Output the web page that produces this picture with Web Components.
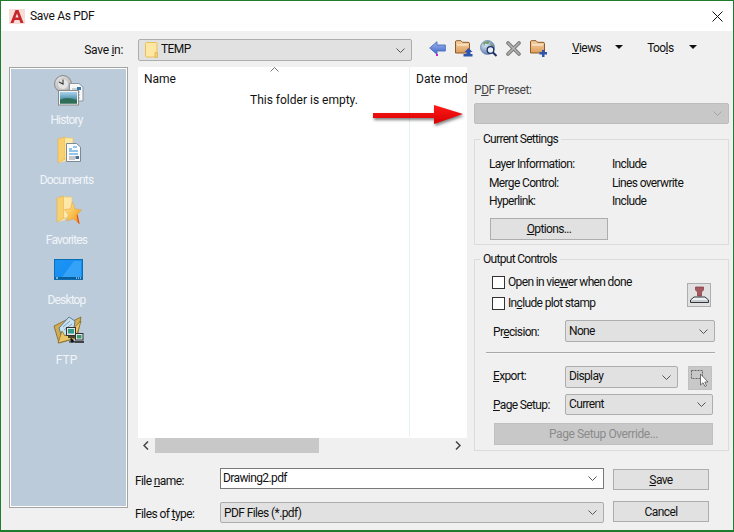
<!DOCTYPE html>
<html>
<head>
<meta charset="utf-8">
<title>Save As PDF</title>
<style>
    html, body { margin: 0; padding: 0; background: #f0f0f0; }
    body { font: 12px Roboto, "Liberation Sans", sans-serif; color: #111; }
</style>
</head>
<body>
<pdf-dialog></pdf-dialog>
<script>
// Icon table, each one drawn at its real pixel size
const FOLDER = `
    <path d="M1 3 L9 1 L9 2 L15 2 L15 22 L9 22 L9 25 L1 27 Z" fill="#fde49a"/>
    <path d="M1 3 L8 1 L8 23 L1 27 Z" fill="#f9d06f" stroke="#dcae52" stroke-width=".6"/>
    <path d="M8 2 H16 V23 H8" fill="#fde8a8" stroke="#e8c26a" stroke-width=".6"/>`;

const ICONS = {
    logo: `<svg width="16" height="15" viewBox="0 0 16 15"><rect width="16" height="15" fill="#f7dcd8"/>
        <path d="M1.5 14 L6.5 1 H9.5 L14.5 14 H11.5 L10.4 11 H5.6 L4.5 14 Z M6.4 8.6 H9.6 L8 4.4 Z" fill="#c5252b" fill-rule="evenodd"/></svg>`,
    close: `<svg width="11" height="11" viewBox="0 0 11 11"><path d="M.5 .5 L10.5 10.5 M10.5 .5 L.5 10.5" stroke="#111" fill="none"/></svg>`,
    smallFolder: `<svg width="13" height="16" viewBox="0 0 13 16"><path d="M.5 1.5 Q.5 .5 1.5 .5 H11 Q12 .5 12 1.5 V15 H1.5 Q.5 15 .5 14 Z" fill="#fde7a2" stroke="#e9c15c"/>
        <path d="M10 10.5 H12.5 V15.5 H10 Z" fill="#f6d37a" stroke="#e0b24e" stroke-width=".8"/></svg>`,
    back: `<svg width="17" height="15" viewBox="0 0 17 15"><defs><linearGradient id="g" x1="0" y1="0" x2="0" y2="1"><stop offset="0" stop-color="#9db8ef"/><stop offset="1" stop-color="#3d63c4"/></linearGradient></defs>
        <path d="M.7 7 L8 .7 V4 H16.3 V10 H8 V13.4 Z" fill="url(#g)" stroke="#4a6cc0" stroke-width=".9"/><rect x="7" y="13" width="2" height="2" fill="#d020c8"/></svg>`,
    up: `<svg width="18" height="17" viewBox="0 0 18 17"><defs><linearGradient id="g" x1="0" y1="0" x2="0" y2="1"><stop offset="0" stop-color="#f6d3a4"/><stop offset="1" stop-color="#dc9d5b"/></linearGradient></defs>
        <path d="M.5 2 Q.5 .7 1.7 .7 H6 L7.5 2.3 H13 Q14.5 2.3 14.5 3.6 V13 H.5 Z" fill="url(#g)" stroke="#8d5a28"/><rect x="2" y="4.3" width="11" height="1.2" fill="#fbeedc"/>
        <path d="M13.5 8 L17.5 12 H15.5 V14 H17.5 V16.5 H8.5 V14 H11.5 V12 H9.5 Z" fill="#2f55ad"/></svg>`,
    search: `<svg width="18" height="17" viewBox="0 0 18 17"><defs><radialGradient id="g" cx=".35" cy=".3" r=".8"><stop offset="0" stop-color="#dce7f4"/><stop offset="1" stop-color="#4d6fa6"/></radialGradient></defs>
        <circle cx="7.5" cy="7.5" r="7" fill="url(#g)" stroke="#6b86ad" stroke-width=".8"/><path d="M3 3 Q6 .5 10 1.5 L8 4 L5 3.5 L4.5 6 Z M10 3 L13.5 6 L11 6 Z" fill="#6e9a62"/>
        <circle cx="10.5" cy="10" r="3.3" fill="#e8f0f8" stroke="#1d2f63" stroke-width="1.3"/><path d="M13 12.5 L16.5 16" stroke="#1d2f63" stroke-width="2"/></svg>`,
    del: `<svg width="15" height="15" viewBox="0 0 15 15"><path d="M2 2 L13 13 M13 2 L2 13" stroke="#777" stroke-width="3.6" stroke-linecap="round"/><path d="M2 2 L13 13 M13 2 L2 13" stroke="#b2b2b2" stroke-width="1.6" stroke-linecap="round"/></svg>`,
    newFolder: `<svg width="18" height="17" viewBox="0 0 18 17"><defs><linearGradient id="g" x1="0" y1="0" x2="0" y2="1"><stop offset="0" stop-color="#f6d3a4"/><stop offset="1" stop-color="#dc9d5b"/></linearGradient></defs>
        <path d="M.5 2 Q.5 .7 1.7 .7 H6 L7.5 2.3 H13 Q14.5 2.3 14.5 3.6 V13 H.5 Z" fill="url(#g)" stroke="#8d5a28"/><rect x="2" y="4.3" width="11" height="1.2" fill="#fbeedc"/>
        <path d="M12 10 H14.5 V12 H17 V14.5 H14.5 V17 H12 V14.5 H9.5 V12 H12 Z" fill="#2f55ad"/></svg>`,
    tri: `<svg width="8" height="4" viewBox="0 0 8 4"><path d="M0 0 H8 L4 4 Z" fill="#111"/></svg>`,
    history: `<svg width="30" height="31" viewBox="0 0 30 31"><defs><radialGradient id="c" cx=".4" cy=".35" r=".75"><stop offset="0" stop-color="#f2f2f2"/><stop offset="1" stop-color="#a8a8a8"/></radialGradient>
        <linearGradient id="s" x1="0" y1="0" x2="0" y2="1"><stop offset="0" stop-color="#a9d3ee"/><stop offset=".55" stop-color="#5c9bb6"/><stop offset="1" stop-color="#2c6a58"/></linearGradient></defs>
        <circle cx="9" cy="9" r="8.5" fill="url(#c)" stroke="#8b8b8b"/><circle cx="9" cy="9" r="5.5" fill="#e4e4e4" stroke="#aaa" stroke-width=".5"/><path d="M9 4.5 V9 L5 7" stroke="#333" fill="none" stroke-width="1.1"/>
        <path d="M15.5 8.5 H25 L29 12 V26 H15.5 Z" fill="#f8f8f8" stroke="#8e979f"/><path d="M18 14 H26 M18 17 H26 M18 20 H26 M18 23 H26" stroke="#9aa5ad"/><rect x="23" y="12" width="4" height="3" fill="#3b78a8"/>
        <rect x="4.5" y="15.5" width="20" height="14.5" fill="#f4f4f4" stroke="#8b8b8b"/><rect x="6" y="17" width="17" height="11.5" fill="url(#s)"/><path d="M6 25 Q12 21 23 25 V28.5 H6 Z" fill="#2f6f59"/></svg>`,
    documents: `<svg width="24" height="28" viewBox="0 0 24 28">${FOLDER}
        <path d="M9.5 7.5 H19.5 L23.5 11 V25.5 H9.5 Z" fill="#fbfbfb" stroke="#7e8a92"/><path d="M12 13 H15 M16 11 H20 M12 15 H21 M12 18 H21" stroke="#2f8fd8"/><path d="M12 21 H18 M12 23 H18" stroke="#8a949c"/><rect x="18.5" y="20" width="3.5" height="3" fill="#47708f"/></svg>`,
    favorites: `<svg width="26" height="30" viewBox="0 0 26 30">${FOLDER}
        <defs><linearGradient id="st" x1="0" y1="0" x2="1" y2="1"><stop offset="0" stop-color="#fff0a8"/><stop offset=".6" stop-color="#f7b73f"/><stop offset="1" stop-color="#e88a20"/></linearGradient></defs>
        <path d="M16.5 7 L19 14 L25.5 14.8 L21.5 19.5 L23.5 29 L17.5 23.8 L10.8 26 L12.5 19.6 L8.5 14.6 L14.5 13.8 Z" fill="url(#st)" stroke="#eaa24a" stroke-width=".6"/><path d="M21.5 19.5 L23.5 29 L22 27.8 L20.6 20 Z" fill="#d9482a"/></svg>`,
    desktop: `<svg width="29" height="21" viewBox="0 0 29 21"><defs><linearGradient id="b" x1="0" y1="0" x2="1" y2="1"><stop offset="0" stop-color="#1f93f3"/><stop offset="1" stop-color="#0d8cf2"/></linearGradient></defs>
        <rect x=".5" y=".5" width="28" height="20" fill="url(#b)" stroke="#0b6fb7"/><path d="M8 18 L20 2 H27 V18 Z" fill="#3fa8f8" opacity=".75"/><rect x="1" y="18" width="27" height="2" fill="#0a5f9d"/>
        <path d="M2 19 H4 M22 19 H23 M24 19 H25 M26 19 H27" stroke="#fff"/></svg>`,
    ftp: `<svg width="31" height="29" viewBox="0 0 31 29"><path d="M1 10 L15 3 L18 6 L28 1 L24 22 L6 27 Z" fill="#d2ac52" stroke="#7d6528" stroke-width=".8"/>
        <path d="M6 12 L16 1 L22 5 L20 18 L10 25 Z" fill="#c6e0f0" stroke="#44688a" stroke-width=".8"/><path d="M10 11 L17 5 M11 14 L19 8" stroke="#7da0bc"/>
        <path d="M5 27 L9 15 L12 20 L28 5 L23 22 Z" fill="#e9c767" stroke="#8a6f2c" stroke-width=".8"/>
        <rect x="13.5" y="11.5" width="9" height="8" fill="#dfe7e6" stroke="#333"/><rect x="15" y="13" width="6" height="4.5" fill="#2f9a86"/><path d="M15 21 H22" stroke="#222" stroke-width="1.6"/>
        <rect x="22.5" y="17.5" width="7.5" height="6.5" fill="#dfe7e6" stroke="#333"/><rect x="24" y="19" width="4.5" height="3.5" fill="#3a9b73"/><path d="M22 26 H31" stroke="#222" stroke-width="1.6"/><path d="M18 22 V26 H22 M16 26 H20" stroke="#222"/></svg>`,
    stamp: `<svg width="19" height="18" viewBox="0 0 19 18"><path d="M5.5 1 H13.5 V4 L11.5 6 V10 H7.5 V6 L5.5 4 Z" fill="#a65a60" stroke="#7c3d42" stroke-width=".7"/>
        <path d="M4 11 H15 L18.5 14 V16.5 H.5 V14 Z" fill="#eef1f4" stroke="#222" stroke-width=".9"/><path d="M1 15 H18" stroke="#9fa8b0"/></svg>`,
    pick: `<svg width="18" height="18" viewBox="0 0 18 18"><rect x=".5" y="1.5" width="11" height="8" fill="none" stroke="#666" stroke-dasharray="2 1"/>
        <path d="M9.5 5 V16 L12 13.7 L14 17.5 L15.5 16.6 L13.8 13 H17 Z" fill="#fff" stroke="#555" stroke-width=".8"/></svg>`
};

class WinIcon extends HTMLElement {
    connectedCallback() {
        if (this.shadowRoot) return;
        this.attachShadow({ mode: 'open' });
        this.shadowRoot.innerHTML = `<style>:host { display: inline-flex; line-height: 0; } svg { display: block; }</style>`
            + (ICONS[this.getAttribute('name')] || '');
    }
}

const CHEVRON = `<svg width="9" height="5" viewBox="0 0 9 5"><path d="M.5 .5 L4.5 4.5 L8.5 .5" fill="none" stroke="currentColor"/></svg>`;

class WinCombo extends HTMLElement {
    connectedCallback() {
        if (this.shadowRoot) return;
        this.attachShadow({ mode: 'open' });
        this.shadowRoot.innerHTML = `
            <style>
                :host {
                    display: flex;
                    box-sizing: border-box;
                    height: 22px;
                    align-items: center;
                    background: #e1e1e1;
                    border: 1px solid #adadad;
                    border-radius: 2px;
                    padding: 0 6px 0 3px;
                    color: #555;
                }
                :host([disabled]) { background: #c8c8c8; border-color: #bdbdbd; color: #a4a4a4; }
                :host([edit]) { background: #fff; border-color: #7a7a7a; border-radius: 0; padding-left: 2px; }
                .text { flex: 1; display: flex; align-items: center; gap: 3px; color: #111; margin-top: -2px; white-space: nowrap; }
                svg { display: block; flex: none; }
            </style>
            <div class="text"><slot></slot></div>
            ${CHEVRON}
        `;
    }
}

class WinButton extends HTMLElement {
    connectedCallback() {
        if (this.shadowRoot) return;
        this.attachShadow({ mode: 'open' });
        this.shadowRoot.innerHTML = `
            <style>
                :host {
                    display: flex;
                    box-sizing: border-box;
                    align-items: center;
                    justify-content: center;
                    height: 22px;
                    background: #e1e1e1;
                    border: 1px solid #adadad;
                    color: #111;
                }
                :host([disabled]) { background: #c8c8c8; border-color: #c0c0c0; color: #8b8b8b; }
            </style>
            <slot></slot>
        `;
    }
}

class GroupBox extends HTMLElement {
    connectedCallback() {
        if (this.shadowRoot) return;
        this.attachShadow({ mode: 'open' });
        this.shadowRoot.innerHTML = `
            <style>
                :host { display: block; }
                fieldset { margin: 0; padding: 0; height: 100%; box-sizing: border-box; border: 1px solid #dcdcdc; min-width: 0; }
                legend { padding: 0 3px; margin-left: 5px; height: 16px; line-height: 16px; color: #111; letter-spacing: -.7px; }
            </style>
            <fieldset>
                <legend>${this.getAttribute('label')}</legend>
                <slot></slot>
            </fieldset>
        `;
    }
}

class PlaceItem extends HTMLElement {
    connectedCallback() {
        if (this.shadowRoot) return;
        this.attachShadow({ mode: 'open' });
        this.shadowRoot.innerHTML = `
            <style>
                :host { display: flex; flex-direction: column; align-items: center; height: 60px; color: #f1f5f9; letter-spacing: -.85px; }
                .icon { height: 40px; display: flex; align-items: center; justify-content: center; }
                .label { height: 20px; line-height: 20px; margin-right: 4px; }
            </style>
            <div class="icon"><slot></slot></div>
            <div class="label">${this.getAttribute('label')}</div>
        `;
    }
}

class PlacesBar extends HTMLElement {
    connectedCallback() {
        if (this.shadowRoot) return;
        this.attachShadow({ mode: 'open' });
        this.shadowRoot.innerHTML = `
            <style>
                :host {
                    display: block;
                    flex: none;
                    box-sizing: border-box;
                    width: 119px;
                    height: 441px;
                    background: #bccbd9;
                    border: 1px solid #a3a3a3;
                    box-shadow: inset 0 0 0 1px #fff;
                    padding-top: 2px;
                }
            </style>
            <slot></slot>
        `;
    }
}

class FileList extends HTMLElement {
    connectedCallback() {
        if (this.shadowRoot) return;
        this.attachShadow({ mode: 'open' });
        this.shadowRoot.innerHTML = `
            <style>
                :host { display: flex; flex-direction: column; flex: none; width: 329px; height: 386px; overflow: hidden; letter-spacing: 0; }
                .view { flex: none; height: 371px; background: #fff; display: flex; flex-direction: column; position: relative; }
                .head { display: grid; grid-template-columns: 271px 1fr; height: 25px; }
                .head div { padding: 4px 0 0 6px; line-height: 16px; white-space: nowrap; }
                .head .date { border-left: 1px solid #e6eef6; height: 370px; box-sizing: border-box; padding-right: 0; }
                .sort { position: absolute; left: 132px; top: 0; }
                .empty { position: absolute; left: 112px; top: 25px; line-height: 16px; }
                .scroll { flex: none; height: 15px; display: flex; align-items: center; color: #444; }
                .scroll svg { display: block; flex: none; }
                .thumb { width: 164px; height: 15px; background: #c8c8c8; margin: 0 136px 0 6px; }
            </style>
            <div class="view">
                <div class="head"><div>Name</div><div class="date">Date mod</div></div>
                <svg class="sort" width="9" height="5" viewBox="0 0 9 5"><path d="M.5 4.5 L4.5 .5 L8.5 4.5" fill="none" stroke="#777"/></svg>
                <div class="empty">This folder is empty.</div>
            </div>
            <div class="scroll">
                <svg style="margin-left:5px" width="6" height="9" viewBox="0 0 6 9"><path d="M5 .5 L1 4.5 L5 8.5" fill="none" stroke="#444" stroke-width="1.5"/></svg>
                <div class="thumb"></div>
                <svg width="6" height="9" viewBox="0 0 6 9"><path d="M1 .5 L5 4.5 L1 8.5" fill="none" stroke="#444" stroke-width="1.5"/></svg>
            </div>
        `;
    }
}

class PdfOptions extends HTMLElement {
    connectedCallback() {
        if (this.shadowRoot) return;
        this.attachShadow({ mode: 'open' });
        this.shadowRoot.innerHTML = `
            <style>
                :host { display: block; flex: none; box-sizing: border-box; width: 266px; padding: 15px 4px 0 7px; letter-spacing: -.65px; }
                .preset-label { line-height: 16px; color: #444; margin-bottom: 5px; letter-spacing: -.45px; }
                .settings { height: 114px; margin-top: 7px; }
                .out { height: 200px; margin-top: 6px; }
                .rows { display: grid; grid-template-columns: 123px 1fr; grid-auto-rows: 18.5px; line-height: 18.5px; padding: 8px 0 0 14px; }
                .options { width: 118px; margin: 7px 0 0 15px; }
                .checks { display: flex; justify-content: space-between; padding: 8px 17px 0 17px; }
                .check { display: flex; align-items: center; gap: 3px; height: 14px; margin-bottom: 7px; line-height: 14px; }
                .check i { display: block; box-sizing: border-box; width: 13px; height: 13px; background: #fff; border: 1px solid #333; }
                .stamp { width: 24px; height: 24px; margin-top: 8px; background: #e1e1e1; border: 1px solid #adadad; box-sizing: border-box; display: flex; align-items: center; justify-content: center; }
                .row { display: flex; align-items: center; padding-left: 18px; }
                .row > span { width: 72px; flex: none; }
                hr { border: 0; border-top: 1px solid #a8a8a8; height: 0; margin: 10px 13px 12px 11px; border-bottom: 1px solid #f8f8f8; }
                .pick { width: 24px; height: 24px; margin-left: 10px; background: #c8c8c8; border: 1px solid #c0c0c0; box-sizing: border-box; display: flex; align-items: center; justify-content: center; }
                .override { margin: 8px 15px 0 19px; letter-spacing: -.4px; }
                u { text-decoration-thickness: 1px; }
            </style>
            <div class="preset-label">P<u>D</u>F Preset:</div>
            <win-combo disabled style="height:21px"></win-combo>
            <group-box class="settings" label="Current Settings">
                <div class="rows">
                    <div>Layer Information:</div><div>Include</div>
                    <div>Merge Control:</div><div>Lines overwrite</div>
                    <div>Hyperlink:</div><div>Include</div>
                </div>
                <win-button class="options"><span><u>O</u>ptions...</span></win-button>
            </group-box>
            <group-box class="out" label="Output Controls">
                <div class="checks">
                    <div>
                        <div class="check"><i></i><span>Open in vie<u>w</u>er when done</span></div>
                        <div class="check"><i></i><span>In<u>c</u>lude plot stamp</span></div>
                    </div>
                    <div class="stamp"><win-icon name="stamp"></win-icon></div>
                </div>
                <div class="row" style="margin-top:3px">
                    <span style="margin-top:1px">Pr<u>e</u>cision:</span>
                    <win-combo style="width:150px"><span style="margin-top:2px">None</span></win-combo>
                </div>
                <hr>
                <div class="row" style="align-items:flex-start">
                    <span style="margin-top:3px"><u>E</u>xport:</span>
                    <win-combo style="width:113px">Display</win-combo>
                    <div class="pick"><win-icon name="pick"></win-icon></div>
                </div>
                <div class="row" style="margin-top:4px">
                    <span><u>P</u>age Setup:</span>
                    <win-combo style="width:148px;height:21px">Current</win-combo>
                </div>
                <win-button class="override" disabled><span>Pa<u>g</u>e Setup Override...</span></win-button>
            </group-box>
        `;
    }
}

class PdfDialog extends HTMLElement {
    connectedCallback() {
        if (this.shadowRoot) return;
        this.attachShadow({ mode: 'open' });
        this.shadowRoot.innerHTML = `
            <style>
                :host {
                    display: block;
                    box-sizing: border-box;
                    position: relative;
                    width: 734px;
                    height: 532px;
                    overflow: hidden;
                    background: #f0f0f0;
                    border: 1px solid #1e7d2d;
                    border-bottom-width: 2px;
                    letter-spacing: -.6px;
                }
                .title { display: flex; align-items: center; height: 30px; background: #fff; padding: 0 10px 0 8px; }
                .title span { margin-left: 5px; flex: 1; letter-spacing: -.3px; }
                .bar { display: flex; align-items: center; height: 22px; margin-top: 8px; padding-left: 8px; }
                .bar label { width: 114px; margin-right: 15px; text-align: right; letter-spacing: -.3px; }
                .bar win-combo { width: 274px; flex: none; }
                .bar win-icon { flex: none; margin-top: -3px; }
                .bar .tri { margin-top: -6px; }
                .menu { white-space: nowrap; margin-top: -4px; }
                .work { display: flex; margin-top: 6px; padding-left: 8px; }
                .right { display: flex; flex-direction: column; }
                .content { display: flex; height: 395px; padding-left: 10px; }
                .bottom { display: grid; grid-template-columns: 85px 384px 105px; grid-template-rows: 22px 22px; row-gap: 11px; margin: 6px 0 0 7px; }
                .bottom win-button { margin-left: 9px; height: 21px; width: 96px; margin-top: 1px; }
                .bottom win-button.cancel { margin-top: 0; }
                .bottom > span { margin-top: 5px; line-height: 16px; }
                .arrow { position: absolute; left: 371px; top: 103px; filter: drop-shadow(1px 2px 1.5px rgba(0,0,0,.5)); }
            </style>
            <div class="title">
                <win-icon name="logo"></win-icon>
                <span>Save As PDF</span>
                <win-icon name="close"></win-icon>
            </div>
            <div class="bar">
                <label>Save <u>i</u>n:</label>
                <win-combo><win-icon name="smallFolder" style="margin:2px 0 0 3px"></win-icon><span>TEMP</span></win-combo>
                <win-icon name="back" style="margin-left:17px"></win-icon>
                <win-icon name="up" style="margin-left:9px"></win-icon>
                <win-icon name="search" style="margin-left:7px"></win-icon>
                <win-icon name="del" style="margin-left:8px"></win-icon>
                <win-icon name="newFolder" style="margin-left:9px"></win-icon>
                <span class="menu" style="margin-left:24px"><u>V</u>iews</span>
                <win-icon class="tri" name="tri" style="margin-left:14px"></win-icon>
                <span class="menu" style="margin-left:24px">Too<u>l</u>s</span>
                <win-icon class="tri" name="tri" style="margin-left:15px"></win-icon>
            </div>
            <div class="work">
                <places-bar>
                    <place-item label="History"><win-icon name="history"></win-icon></place-item>
                    <place-item label="Documents"><win-icon name="documents"></win-icon></place-item>
                    <place-item label="Favorites"><win-icon name="favorites"></win-icon></place-item>
                    <place-item label="Desktop"><win-icon name="desktop" style="margin-top:-2px"></win-icon></place-item>
                    <place-item label="FTP" style="letter-spacing:0"><win-icon name="ftp"></win-icon></place-item>
                </places-bar>
                <div class="right">
                    <div class="content">
                        <file-list></file-list>
                        <pdf-options></pdf-options>
                    </div>
                    <div class="bottom">
                        <span>File <u>n</u>ame:</span>
                        <win-combo edit style="height:21px">Drawing2.pdf</win-combo>
                        <win-button><span><u>S</u>ave</span></win-button>
                        <span>Files of <u>t</u>ype:</span>
                        <win-combo style="margin-top:1px;height:21px"><span style="margin-top:2px">PDF Files (*.pdf)</span></win-combo>
                        <win-button class="cancel">Cancel</win-button>
                    </div>
                </div>
            </div>
            <svg class="arrow" width="94" height="24" viewBox="0 0 94 24">
                <defs><linearGradient id="red" x1="0" y1="0" x2="0" y2="1"><stop offset="0" stop-color="#ff1a1a"/><stop offset="1" stop-color="#d80000"/></linearGradient></defs>
                <path d="M1 9 H62 V1 L91 10 L62 20 V14 H1 Z" fill="url(#red)"/>
            </svg>
        `;
    }
}

customElements.define('win-icon', WinIcon);
customElements.define('win-combo', WinCombo);
customElements.define('win-button', WinButton);
customElements.define('group-box', GroupBox);
customElements.define('place-item', PlaceItem);
customElements.define('places-bar', PlacesBar);
customElements.define('file-list', FileList);
customElements.define('pdf-options', PdfOptions);
customElements.define('pdf-dialog', PdfDialog);
</script>
</body>
</html>
